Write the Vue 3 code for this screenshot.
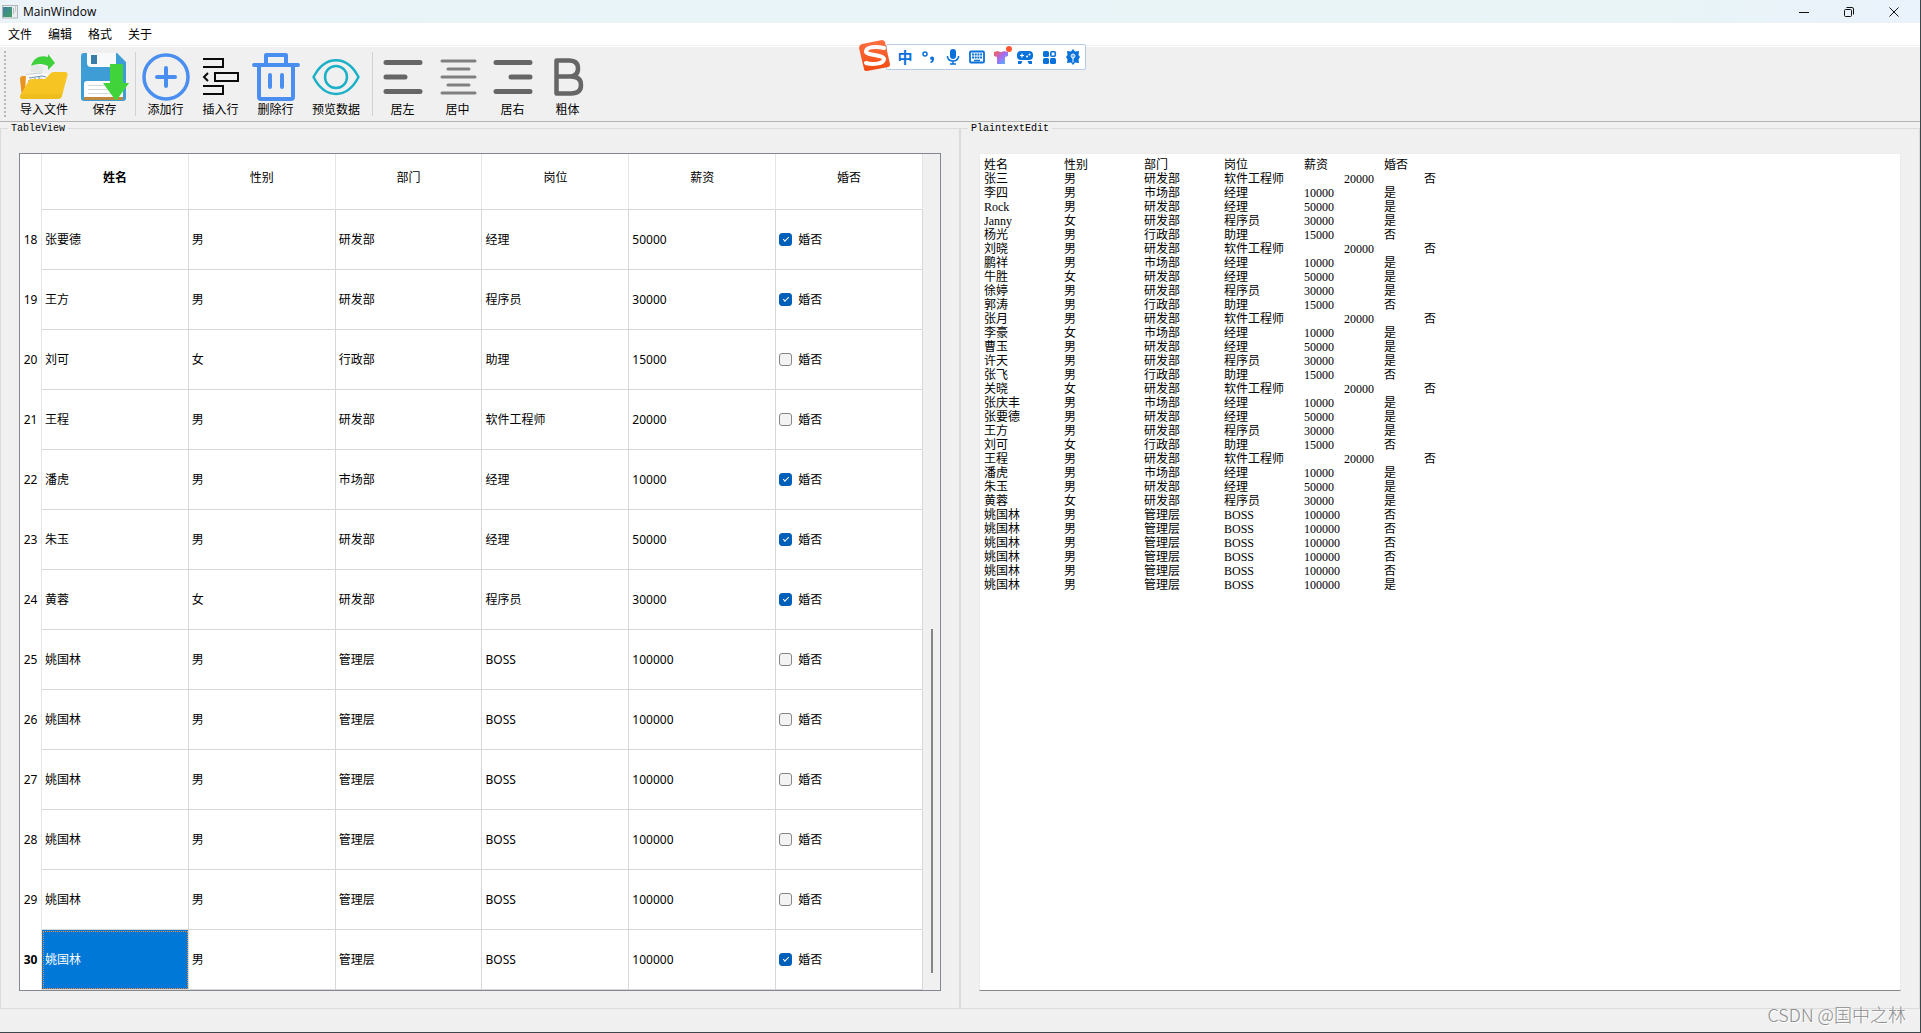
<script setup>
import { ref } from 'vue'

const menus = ['文件', '编辑', '格式', '关于']

const columns = ['姓名', '性别', '部门', '岗位', '薪资', '婚否']

const rows = ref([
  [18, '张要德', '男', '研发部', '经理', '50000', true],
  [19, '王方', '男', '研发部', '程序员', '30000', true],
  [20, '刘可', '女', '行政部', '助理', '15000', false],
  [21, '王程', '男', '研发部', '软件工程师', '20000', false],
  [22, '潘虎', '男', '市场部', '经理', '10000', true],
  [23, '朱玉', '男', '研发部', '经理', '50000', true],
  [24, '黄蓉', '女', '研发部', '程序员', '30000', true],
  [25, '姚国林', '男', '管理层', 'BOSS', '100000', false],
  [26, '姚国林', '男', '管理层', 'BOSS', '100000', false],
  [27, '姚国林', '男', '管理层', 'BOSS', '100000', false],
  [28, '姚国林', '男', '管理层', 'BOSS', '100000', false],
  [29, '姚国林', '男', '管理层', 'BOSS', '100000', false],
  [30, '姚国林', '男', '管理层', 'BOSS', '100000', true],
].map(([id, name, sex, dept, post, pay, married]) => ({ id, cells: [name, sex, dept, post, pay], married })))

const selectedId = ref(30)

const jobs = [
  ['研发部', '软件工程师', '20000', '否'],
  ['市场部', '经理', '10000', '是'],
  ['研发部', '经理', '50000', '是'],
  ['研发部', '程序员', '30000', '是'],
  ['行政部', '助理', '15000', '否'],
]
const people = [
  '张三 男', '李四 男', 'Rock 男', 'Janny 女', '杨光 男',
  '刘晓 男', '鹏祥 男', '牛胜 女', '徐婷 男', '郭涛 男',
  '张月 男', '李豪 女', '曹玉 男', '许天 男', '张飞 男',
  '关晓 女', '张庆丰 男', '张要德 男', '王方 男', '刘可 女',
  '王程 男', '潘虎 男', '朱玉 男', '黄蓉 女',
]
const bosses = ['否', '否', '否', '否', '否', '是']

const text = ref([
  columns,
  ...people.map((p, i) => [...p.split(' '), ...jobs[i % jobs.length]]),
  ...bosses.map((m) => ['姚国林', '男', '管理层', 'BOSS', '100000', m]),
].map((line) => line.join('\t\t')).join('\n'))
</script>

<template>
  <div class="window">
    <header class="titlebar">
      <svg class="app-icon" width="16" height="14" viewBox="0 0 16 14">
        <defs>
          <linearGradient id="appg" x1="0" y1="0" x2="1" y2="1">
            <stop offset="0" stop-color="#3f7fa3" /><stop offset="1" stop-color="#3fa05f" />
          </linearGradient>
        </defs>
        <rect x=".5" y=".5" width="15" height="12.5" fill="#e9edef" stroke="#aeb6ba" />
        <rect x="1" y="2" width="9" height="10" fill="url(#appg)" />
        <rect x="11" y="3" width="1" height="6" fill="#b6bcc0" />
        <rect x="13" y="1" width="1" height="6" fill="#c5cacd" />
      </svg>
      <span class="title">MainWindow</span>
      <div class="win-buttons">
        <button type="button" aria-label="Minimize"><svg width="12" height="12" viewBox="0 0 12 12"><path d="M1 6.500h10" /></svg></button>
        <button type="button" aria-label="Restore"><svg width="12" height="12" viewBox="0 0 12 12"><rect x="1.500" y="3.500" width="7" height="7" rx="1" /><path d="M3.500 1.500H9q1.500 0 1.500 1.500V8.500" /></svg></button>
        <button type="button" aria-label="Close"><svg width="12" height="12" viewBox="0 0 12 12"><path d="M1.500 1.500l9 9M10.500 1.500l-9 9" /></svg></button>
      </div>
    </header>

    <nav class="menubar">
      <button v-for="m in menus" :key="m" type="button">{{ m }}</button>
    </nav>

    <div class="toolbar" role="toolbar">
      <span class="grip"></span>
      <button type="button" class="wide">
        <svg width="48" height="48" viewBox="0 0 48 48">
          <path d="M0 26q0-3 3-3h6v22H2z" fill="#e8941f" />
          <path d="M6 21l18-1 14 4v20H5z" fill="#fafafa" />
          <path d="M6 21.500l16-1.500" stroke="#c9d2d8" />
          <path d="M9 25l13-2 4 1M8 28l14-2M11 26v2M15 25v2M19 24v2" stroke="#6d93ab" fill="none" />
          <path d="M10 17q2-4 5-6l8 3v6l-12-1z" fill="#e4e8e7" />
          <path d="M11 13C14 4 21 2 28 4V1l7 9-7 7v-4c-7-3-12-2-17 0z" fill="#3fd13b" />
          <path d="M0 43L8 29q1-3 4-3h13l6-6q1-1 3-1h11q3 0 2.500 3L42 43q-1 3-4 3H4q-5 0-4-3z" fill="#f6c524" />
          <path d="M0 43l1-2h41l-.5 3q-1 2-4 2H4q-4 0-4-3z" fill="#edbd1d" />
        </svg>
        <span>导入文件</span>
      </button>
      <button type="button">
        <svg width="48" height="48" viewBox="0 0 48 48">
          <path d="M3 0h33l9 9v36q0 3-3 3H3q-3 0-3-3V3q0-3 3-3z" fill="#3e9dd5" />
          <path d="M6 0h29v10q0 4-4 4H10q-4 0-4-4z" fill="#f7f9fa" />
          <rect x="10" y="2" width="6" height="9" fill="#397ea9" />
          <path d="M3 31q0-3 3-3h32q4 0 4 3v14H3z" fill="#fff" />
          <path d="M7 32.500h24M7 36.500h24M7 40.500h24" stroke="#d6d9da" />
          <path d="M3 44h39v3H3z" fill="#be883e" />
          <path d="M29 11h13v19h6L35 48 22 30h7z" fill="#40d43a" />
        </svg>
        <span>保存</span>
      </button>
      <span class="sep"></span>
      <button type="button">
        <svg width="48" height="48" viewBox="0 0 48 48" fill="none" stroke="#4a8ff0" stroke-width="4" stroke-linecap="round">
          <circle cx="24" cy="24" r="22" stroke-width="3.500" /><path d="M24 15v18M15 24h18" />
        </svg>
        <span>添加行</span>
      </button>
      <button type="button">
        <svg width="48" height="48" viewBox="0 0 48 48" fill="none" stroke="#0a0a0a" stroke-width="2">
          <path d="M6 6h20v8H6M6 33h20v8H6M18 20h23v8H18zM11 20l-4 4 4 4" />
        </svg>
        <span>插入行</span>
      </button>
      <button type="button">
        <svg width="48" height="48" viewBox="0 0 48 48" fill="none" stroke="#4a8ff0" stroke-width="4" stroke-linecap="round" stroke-linejoin="round">
          <path d="M2 12h44M14 11V2h20v9M7 13v31q0 2 2 2h30q2 0 2-2V13M18 22v12M30 22v12" />
        </svg>
        <span>删除行</span>
      </button>
      <button type="button" class="wide">
        <svg width="48" height="48" viewBox="0 0 48 48" fill="none" stroke="#1ab0c8" stroke-width="2.500">
          <path d="M1.500 24C13 1.500 35 1.500 46.500 24 35 46.500 13 46.500 1.500 24z" stroke-linejoin="round" />
          <circle cx="24" cy="24" r="11" />
        </svg>
        <span>预览数据</span>
      </button>
      <span class="sep"></span>
      <button type="button">
        <svg width="48" height="48" viewBox="0 0 48 48" stroke="#666" stroke-width="5" stroke-linecap="round"><path d="M7 9.500h34M7 24h19M7 38.500h34" /></svg>
        <span>居左</span>
      </button>
      <button type="button">
        <svg width="48" height="48" viewBox="0 0 48 48" stroke="#808080" stroke-width="3" stroke-linecap="round"><path d="M8 8h33M14 16h21M8 24h33M14 32h21M8 40h33" /></svg>
        <span>居中</span>
      </button>
      <button type="button">
        <svg width="48" height="48" viewBox="0 0 48 48" stroke="#666" stroke-width="5" stroke-linecap="round"><path d="M7 9.500h34M22 24h19M7 38.500h34" /></svg>
        <span>居右</span>
      </button>
      <button type="button">
        <svg width="48" height="48" viewBox="0 0 48 48" fill="none" stroke="#666" stroke-width="4.500" stroke-linejoin="round"><path d="M12.500 7.500H25q9 0 9 8t-9 8H12.500zM12.500 23.500H27q10 0 10 8.500t-10 8.500H12.500z" /></svg>
        <span>粗体</span>
      </button>
    </div>

    <main class="panes">
      <fieldset class="group">
        <legend>TableView</legend>
        <div class="table-frame">
          <div class="table-view">
            <table>
              <colgroup><col class="num-col"><col v-for="c in columns" :key="c"></colgroup>
              <thead>
                <tr>
                  <td class="corner"></td>
                  <th v-for="(c, i) in columns" :key="c" scope="col" :class="{ current: i === 0 }">{{ c }}</th>
                </tr>
              </thead>
              <tbody>
                <tr v-for="r in rows" :key="r.id">
                  <th scope="row" :class="{ current: r.id === selectedId }">{{ r.id }}</th>
                  <td v-for="(c, i) in r.cells" :key="i" :class="{ selected: r.id === selectedId && i === 0 }">{{ c }}</td>
                  <td>
                    <label class="check"><input v-model="r.married" type="checkbox"><span>婚否</span></label>
                  </td>
                </tr>
              </tbody>
            </table>
          </div>
          <div class="scrollbar"><div class="thumb"></div></div>
        </div>
      </fieldset>
      <fieldset class="group">
        <legend>PlaintextEdit</legend>
        <textarea v-model="text" aria-label="PlaintextEdit" spellcheck="false"></textarea>
      </fieldset>
    </main>

    <footer class="statusbar"><span class="watermark">CSDN @国中之林</span></footer>

    <div class="ime">
      <svg class="ime-logo" width="32" height="31" viewBox="0 0 32 31">
        <defs>
          <linearGradient id="imeg" x1="0" y1="0" x2="0" y2="1">
            <stop offset="0" stop-color="#ff7043" /><stop offset="1" stop-color="#f04a10" />
          </linearGradient>
        </defs>
        <path d="M3 4L23 0q2 0 3 2l5 22q0 3-2 3L8 31q-3 0-3-2L0 8q0-3 3-4z" fill="url(#imeg)" />
        <path d="M25 8C16 6 8 7 7 11c-1 5 17 3 18 8 0 5-12 6-18 4" fill="none" stroke="#fff" stroke-width="4" stroke-linecap="round" />
      </svg>
      <div class="ime-bar">
        <button type="button">中</button>
        <button type="button" aria-label="标点"><svg width="16" height="16" viewBox="0 0 16 16"><circle cx="4" cy="5" r="2" fill="none" stroke="#0871da" stroke-width="1.500" /><path d="M9 9a2 2 0 1 1 4 1q0 3-3 4l-1-1q2-1 2-2-2 0-2-2z" /></svg></button>
        <button type="button" aria-label="语音"><svg width="16" height="16" viewBox="0 0 16 16"><rect x="5" y="0" width="6" height="10" rx="3" /><path d="M2.500 7v1q1 4 5.500 4t5.500-4V7M8 12v3M5 15h6" fill="none" stroke="#0871da" stroke-width="1.500" /></svg></button>
        <button type="button" aria-label="键盘"><svg width="16" height="16" viewBox="0 0 16 16"><rect x="1" y="2.500" width="14" height="11" rx="1" fill="none" stroke="#0871da" stroke-width="1.800" /><path d="M3 5.500h10M3 8.500h10" stroke="#0871da" stroke-width="2" stroke-dasharray="2 .7" /><path d="M5 11.500h6" stroke="#0871da" stroke-width="1.500" /></svg></button>
        <button type="button" class="skin" aria-label="皮肤">
          <svg width="16" height="16" viewBox="0 0 16 16">
            <defs><linearGradient id="sking" x1="0" y1="0" x2="1" y2="1"><stop offset="0" stop-color="#ff5b45" /><stop offset=".5" stop-color="#a66df5" /><stop offset="1" stop-color="#39c8ff" /></linearGradient></defs>
            <path d="M1 3l4-1q3 2 6 0l4 1v4l-3 1v7H4V8L1 7z" fill="url(#sking)" />
          </svg>
          <span class="dot"></span>
        </button>
        <button type="button" aria-label="游戏"><svg width="16" height="16" viewBox="0 0 16 16"><rect x="0" y="2" width="16" height="9" rx="4" /><path d="M3 6.500h4M5 4.500v4" stroke="#fff" stroke-width="1.200" /><circle cx="10" cy="7.500" r="1" fill="#fff" /><circle cx="12.500" cy="5.500" r="1" fill="#fff" /><path d="M1 12h4.500l-1.500 3H1zM15 12h-4.500l1.500 3h3z" /></svg></button>
        <button type="button" aria-label="工具"><svg width="16" height="16" viewBox="0 0 16 16"><rect x="2" y="2" width="6" height="6" rx="1.500" /><rect x="2" y="9" width="6" height="6" rx="1.500" /><rect x="9" y="9" width="6" height="6" rx="1.500" /><rect x="9.800" y="2.800" width="4.500" height="4.500" rx="1" fill="none" stroke="#0871da" stroke-width="1.600" /></svg></button>
        <button type="button" aria-label="设置"><svg width="16" height="16" viewBox="0 0 16 16"><path d="M8 0l2 2.500 4-.5-.5 4L15 8l-1.500 2.500.5 3.500-4-.5L8 16l-2-2.500L2 14l.5-3.500L1 8l1.500-2L2 2l4 .5z" /><path d="M8 5.500v8" stroke="#fff" stroke-width="1" /><circle cx="8" cy="7" r="2" fill="none" stroke="#fff" stroke-width="1" /></svg></button>
      </div>
    </div>
  </div>
</template>

<style>
body { margin: 0; background: #f0f0f0; }
</style>

<style scoped>
.window {
  position: relative;
  display: flex;
  flex-direction: column;
  box-sizing: border-box;
  min-height: 100vh;
  border-right: 1px solid #3d474b;
  border-bottom: 1px solid #3d474b;
  background: #f0f0f0;
  color: #000;
  font: 12px/16px "Noto Sans", "Noto Sans CJK SC", sans-serif;
}
button {
  margin: 0;
  padding: 0;
  border: 0;
  background: none;
  color: inherit;
  font: inherit;
}
svg { display: block; }

.titlebar {
  display: flex;
  align-items: center;
  height: 23px;
  padding: 0 4px 0 2px;
  background: linear-gradient(90deg, #ebf3f9, #e8f4f7 30%, #e8f4f6 85%, #eaf2fb);
}
.title { margin-left: 5px; font-family: "Open Sans", "Noto Sans", sans-serif; }
.win-buttons { display: flex; margin-left: auto; height: 20px; }
.win-buttons button { display: grid; place-items: center; width: 45px; }
.win-buttons svg { fill: none; stroke: #111; stroke-width: 1; }

.menubar {
  display: flex;
  gap: 16px;
  box-sizing: border-box;
  height: 23px;
  padding: 2px 8px 0;
  border-bottom: 1px solid #f0f0f0;
  background: #fff;
}

.toolbar {
  display: flex;
  height: 74px;
  padding-left: 4px;
  border-top: 1px solid #fff;
  border-bottom: 1px solid #b4b4b4;
}
.grip {
  width: 2px;
  margin: 4px 5px 4px 0;
  background: repeating-linear-gradient(#b9b9b9 0 2px, #f0f0f0 2px 4px);
}
.toolbar button {
  display: flex;
  flex-direction: column;
  align-items: center;
  gap: 1px;
  width: 55px;
  padding-top: 6px;
  white-space: nowrap;
}
.toolbar button.wide { width: 66px; }
.sep { width: 1px; margin: 5px 2px 5px 3px; background: #d2d2d2; }

.panes { display: flex; flex: 1; }
.group {
  display: flex;
  flex: 1;
  min-width: 0;
  margin: 0;
  padding: 18px 18px 17px;
  border: 1px solid #dcdcdc;
}
.group legend {
  margin-left: -11px;
  padding: 1px 3px 0;
  font: 10px/12px "Liberation Mono", monospace;
}

.table-frame {
  display: flex;
  flex: 1;
  border: 1px solid #828790;
  background: #fff;
}
.table-view { flex: 1; min-width: 0; }
table {
  width: 100%;
  table-layout: fixed;
  border-collapse: separate;
  border-spacing: 0;
}
.num-col { width: 22px; }
th, td {
  box-sizing: border-box;
  height: 60px;
  padding: 0 3px;
  border-right: 1px solid #d8d8d8;
  border-bottom: 1px solid #d8d8d8;
  text-align: left;
  font-weight: 400;
}
thead th, .corner { height: 56px; padding-bottom: 7px; border-right-color: #e5e5e5; }
thead th { text-align: center; }
.corner, tbody th { border-bottom: 0; }
tbody th { padding: 0; border-right-color: #e5e5e5; text-align: center; }
th.current { font-weight: 700; }
td.selected {
  background: #0078d7;
  color: #fff;
  outline: 1px dotted #ff8728;
  outline-offset: -2px;
}
.check { display: flex; align-items: center; gap: 6px; }
.check input {
  appearance: none;
  width: 13px;
  height: 13px;
  margin: 0;
  border: 1px solid #858585;
  border-radius: 3px;
  background: #f3f3f3;
}
.check input:checked {
  display: grid;
  place-items: center;
  border-color: #005fb8;
  background: #005fb8;
}
.check input:checked::after {
  content: "";
  width: 5px;
  height: 2px;
  margin-bottom: 2px;
  border: solid #fff;
  border-width: 0 0 1px 1px;
  transform: rotate(-45deg);
}
.scrollbar {
  box-sizing: border-box;
  display: flex;
  flex-direction: column;
  justify-content: flex-end;
  width: 17px;
  padding: 0 0 17px 8px;
  background: #f0f0f0;
}
.thumb { width: 2px; height: 42%; background: #858585; }

textarea {
  box-sizing: border-box;
  flex: 1;
  min-width: 0;
  margin: 0;
  padding: 4px 4px 0;
  border: 1px solid #ececec;
  border-bottom-color: #868686;
  outline: 0;
  resize: none;
  background: #fff;
  color: #000;
  font: 12px/14px "Liberation Serif", "Noto Sans CJK SC", serif;
  tab-size: 40px;
  white-space: pre;
}

.statusbar { position: relative; height: 23px; }
.watermark {
  position: absolute;
  right: 14px;
  bottom: 6px;
  color: #8c8c8c;
  font: 300 18px/24px "Noto Sans CJK SC", sans-serif;
  text-shadow: 1px 1px 0 #fff;
  white-space: nowrap;
}

.ime {
  position: absolute;
  top: 40px;
  left: calc(50% - 101px);
  display: flex;
}
.ime-logo { z-index: 1; }
.ime-bar {
  display: flex;
  align-items: center;
  box-sizing: border-box;
  height: 26px;
  margin: 4px 0 0 -5px;
  padding: 0 0 0 6px;
  border: 1px solid #b7cbe6;
  border-radius: 2px;
  background: #fff;
}
.ime-bar button {
  position: relative;
  display: grid;
  place-items: center;
  width: 24px;
  height: 24px;
  color: #0871da;
  font-size: 15px;
  font-weight: 700;
}
.ime-bar svg { fill: #0871da; }
.dot {
  position: absolute;
  top: 1px;
  right: 1px;
  width: 6px;
  height: 6px;
  border-radius: 50%;
  background: #ff5533;
}
</style>
